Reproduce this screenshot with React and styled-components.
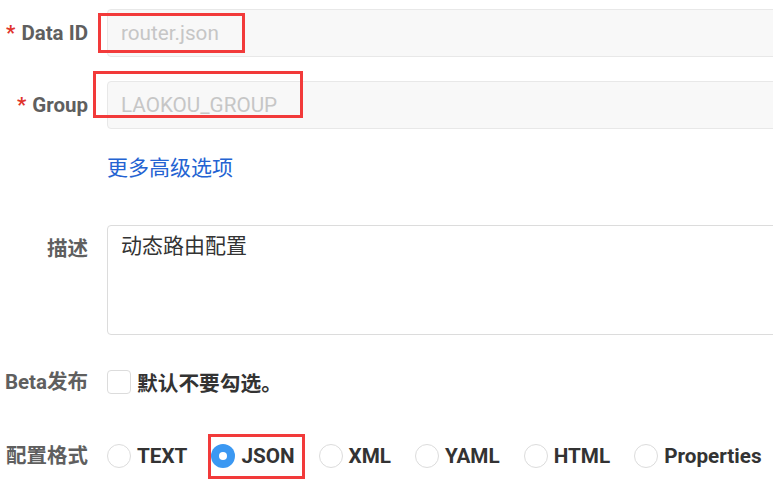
import React from "react";
import styled, { createGlobalStyle } from "styled-components";

const Global = createGlobalStyle`
  html, body { margin: 0; padding: 0; background: #fff; overflow: hidden; }
  body { font-family: Roboto, "Noto Sans CJK SC", sans-serif; }
`;

const Form = styled.div`
  padding-top: 9px;
  width: 900px;
`;

const Row = styled.div`
  display: grid;
  grid-template-columns: 88px 720px;
  column-gap: 19px;
  align-items: ${(p) => (p.$top ? "start" : "center")};
  min-height: 48px;
  margin-top: ${(p) => p.$mt || 0}px;
`;

const Label = styled.div`
  text-align: right;
  font-size: 20.5px;
  font-weight: 700;
  color: #5f5f5f;
  line-height: 48px;
  white-space: nowrap;
`;

const Star = styled.span`
  color: #e0332b;
  margin-right: 6px;
`;

const Field = styled.div`
  position: relative;
  display: flex;
  align-items: center;
  min-height: 48px;
`;

const Input = styled.div`
  box-sizing: border-box;
  width: 100%;
  height: 48px;
  display: flex;
  align-items: center;
  padding-left: 13px;
  background: #f8f8f8;
  border: 1px solid #e8e8e8;
  border-radius: 4px;
  color: #c6c6c6;
  font-size: 20.7px;
`;

const Highlight = styled.div`
  position: absolute;
  box-sizing: border-box;
  border: 3px solid #f23a3a;
  pointer-events: none;
  left: ${(p) => p.$l}px;
  top: ${(p) => p.$t}px;
  width: ${(p) => p.$w}px;
  height: ${(p) => p.$h}px;
`;

const Link = styled.a`
  color: #2463d2;
  font-size: 21px;
  text-decoration: none;
  cursor: pointer;
`;

const TextArea = styled.div`
  box-sizing: border-box;
  width: 100%;
  height: 110px;
  padding: 5px 13px;
  border: 1px solid #dcdcdc;
  border-radius: 4px;
  font-size: 21px;
  line-height: 30px;
  color: #333;
`;

const CheckBox = styled.span`
  box-sizing: border-box;
  width: 24px;
  height: 24px;
  border: 1px solid #dcdcdc;
  border-radius: 4px;
  flex: none;
  margin-right: 6px;
`;

const BoldText = styled.span`
  font-size: 20.7px;
  font-weight: 700;
  color: #333;
`;

const RadioGroup = styled.div`
  display: flex;
  align-items: center;
  gap: 24px;
`;

const RadioItem = styled.label`
  position: relative;
  display: flex;
  align-items: center;
  gap: 6px;
  height: 24px;
`;

const RadioCircle = styled.span`
  box-sizing: border-box;
  width: 24px;
  height: 24px;
  border-radius: 50%;
  flex: none;
  border: ${(p) => (p.$checked ? "none" : "1px solid #dcdcdc")};
  background: ${(p) => (p.$checked ? "#3b98f2" : "#fff")};
  display: flex;
  align-items: center;
  justify-content: center;
  &::after {
    content: "";
    display: ${(p) => (p.$checked ? "block" : "none")};
    width: 8px;
    height: 8px;
    border-radius: 50%;
    background: #fff;
  }
`;

const formats = ["TEXT", "JSON", "XML", "YAML", "HTML", "Properties"];

export default function App() {
  return (
    <>
      <Global />
      <Form>
        <Row>
          <Label>
            <Star>*</Star>Data ID
          </Label>
          <Field>
            <Input>router.json</Input>
            <Highlight $l={-9} $t={4} $w={147} $h={40} />
          </Field>
        </Row>
        <Row $mt={24}>
          <Label>
            <Star>*</Star>Group
          </Label>
          <Field>
            <Input>LAOKOU_GROUP</Input>
            <Highlight $l={-14} $t={-10} $w={210} $h={47} />
          </Field>
        </Row>
        <Row $mt={13}>
          <Label />
          <Field>
            <Link>更多高级选项</Link>
          </Field>
        </Row>
        <Row $mt={35} $top>
          <Label>描述</Label>
          <TextArea>动态路由配置</TextArea>
        </Row>
        <Row $mt={23}>
          <Label>Beta发布</Label>
          <Field>
            <CheckBox />
            <BoldText>默认不要勾选。</BoldText>
          </Field>
        </Row>
        <Row $mt={26}>
          <Label>配置格式</Label>
          <RadioGroup>
            {formats.map((f) => (
              <RadioItem key={f}>
                <RadioCircle $checked={f === "JSON"} />
                <BoldText>{f}</BoldText>
                {f === "JSON" && <Highlight $l={-3} $t={-10} $w={97} $h={45} />}
              </RadioItem>
            ))}
          </RadioGroup>
        </Row>
      </Form>
    </>
  );
}
